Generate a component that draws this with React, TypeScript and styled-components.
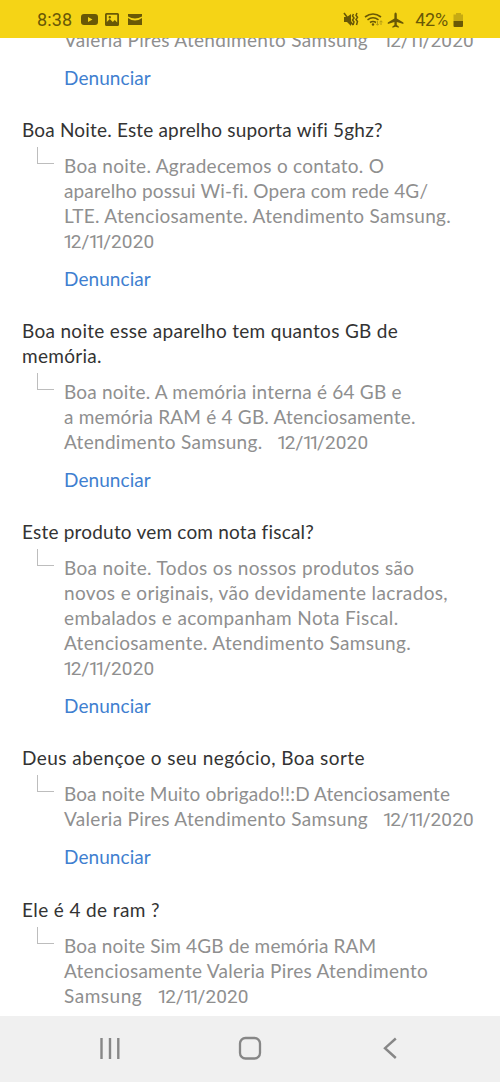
import React from 'react';
import styled, { createGlobalStyle } from 'styled-components';

const GlobalStyle = createGlobalStyle`
  * { box-sizing: border-box; }
  body { margin: 0; background: #fff; }
`;

const Screen = styled.div`
  width: 500px;
  height: 1082px;
  display: flex;
  flex-direction: column;
  overflow: hidden;
  background: #fff;
  font-family: Lato, sans-serif;
`;

const StatusBar = styled.header`
  flex: none;
  height: 38px;
  display: flex;
  align-items: center;
  padding: 2px 36px 0 37px;
  background: #f5d416;
  color: #695806;
  font-family: Roboto, sans-serif;
  font-size: 18px;
  line-height: 20px;
`;

const Clock = styled.span`
  width: 44px;
  letter-spacing: 0.1px;
`;

const StatusIcons = styled.svg`
  display: block;
  flex: none;
`;

const Spacer = styled.div`
  flex: 1;
`;

const Battery = styled.span`
  margin: 0 5px 0 10px;
  letter-spacing: -0.2px;
`;

const Content = styled.main`
  flex: 1;
  min-height: 0;
  overflow: hidden;
`;

const Feed = styled.div`
  margin-top: -11px;
  font-size: 19px;
  line-height: 25px;
`;

const Entry = styled.section`
  margin-bottom: 27.12px;
`;

const Question = styled.h2`
  margin: 0 0 11px 22px;
  font-size: inherit;
  font-weight: 400;
  color: #333;
`;

const Reply = styled.div`
  display: flex;
`;

const Elbow = styled.span`
  flex: none;
  width: 17px;
  height: 17px;
  margin: -6px 10px 0 37px;
  border-left: 1px solid #bdbdbd;
  border-bottom: 1px solid #bdbdbd;
`;

const Answer = styled.p<{ $indent?: boolean }>`
  margin: 0 0 0 ${(p) => (p.$indent ? '64px' : '0')};
  color: #8f8f8f;
`;

const Line = styled.span<{ $track: number }>`
  display: block;
  height: 25px;
  white-space: pre;
  letter-spacing: ${(p) => p.$track}px;
`;

const DateText = styled.span`
  font-family: Roboto, sans-serif;
  line-height: 1;
  letter-spacing: 0.1px;
`;

const One = styled.span`
  margin-left: -1.1px;
  letter-spacing: -2.8px;
`;

const Report = styled.a`
  display: block;
  margin: 13px 0 0 64px;
  color: #3f7fd0;
  letter-spacing: 0.08px;
`;

const NavBar = styled.nav`
  flex: none;
  height: 66px;
  display: flex;
  justify-content: center;
  gap: 110px;
  padding-top: 17px;
  background: #f0f0f0;
`;

type TextLine = { text: string; track: number; date?: string };
type QA = { question: TextLine[]; answer: TextLine[]; report?: boolean };

const items: QA[] = [
  {
    question: [],
    answer: [{ text: 'Valeria Pires Atendimento Samsung   ', track: 0.3, date: '12/11/2020' }],
    report: true,
  },
  {
    question: [{ text: 'Boa Noite. Este aprelho suporta wifi 5ghz?', track: 0.18 }],
    answer: [
      { text: 'Boa noite. Agradecemos o contato. O', track: 0.27 },
      { text: 'aparelho possui Wi-fi. Opera com rede 4G/', track: 0.13 },
      { text: 'LTE. Atenciosamente. Atendimento Samsung.', track: 0.3 },
      { text: '', track: 0, date: '12/11/2020' },
    ],
    report: true,
  },
  {
    question: [
      { text: 'Boa noite esse aparelho tem quantos GB de', track: 0.3 },
      { text: 'memória.', track: 0.3 },
    ],
    answer: [
      { text: 'Boa noite. A memória interna é 64 GB e', track: 0.2 },
      { text: 'a memória RAM é 4 GB. Atenciosamente.', track: 0.2 },
      { text: 'Atendimento Samsung.   ', track: 0.3, date: '12/11/2020' },
    ],
    report: true,
  },
  {
    question: [{ text: 'Este produto vem com nota fiscal?', track: 0.2 }],
    answer: [
      { text: 'Boa noite. Todos os nossos produtos são', track: 0.35 },
      { text: 'novos e originais, vão devidamente lacrados,', track: 0.36 },
      { text: 'embalados e acompanham Nota Fiscal.', track: 0.36 },
      { text: 'Atenciosamente. Atendimento Samsung.', track: 0.31 },
      { text: '', track: 0, date: '12/11/2020' },
    ],
    report: true,
  },
  {
    question: [{ text: 'Deus abençoe o seu negócio, Boa sorte', track: 0.42 }],
    answer: [
      { text: 'Boa noite Muito obrigado!!:D Atenciosamente', track: 0.1 },
      { text: 'Valeria Pires Atendimento Samsung   ', track: 0.3, date: '12/11/2020' },
    ],
    report: true,
  },
  {
    question: [{ text: 'Ele é 4 de ram ?', track: 0.38 }],
    answer: [
      { text: 'Boa noite Sim 4GB de memória RAM', track: 0.14 },
      { text: 'Atenciosamente Valeria Pires Atendimento', track: 0.26 },
      { text: 'Samsung   ', track: 0.52, date: '12/11/2020' },
    ],
  },
];

const DateStamp = ({ value }: { value: string }) => (
  <DateText>
    {value.split('').map((ch, i) => (ch === '1' ? <One key={i}>1</One> : ch))}
  </DateText>
);

const Lines = ({ lines }: { lines: TextLine[] }) => (
  <>
    {lines.map(({ text, track, date }, i) => (
      <Line key={i} $track={track}>
        {text}
        {date && <DateStamp value={date} />}
      </Line>
    ))}
  </>
);

export default function App() {
  return (
    <>
      <GlobalStyle />
      <Screen>
        <StatusBar>
          <Clock>8:38</Clock>
          <StatusIcons width="62" height="16" viewBox="0 0 62 16" fill="#695806">
            <path fillRule="evenodd" d="M3 2h11q3 0 3 3v5q0 3-3 3H3q-3 0-3-3V5q0-3 3-3Zm4 3v5l4.5-2.5Z" />
            <path fillRule="evenodd" d="M25.500 1h11q1.500 0 1.500 1.500v10q0 1.500-1.500 1.500h-11q-1.500 0-1.500-1.500v-10Q24 1 25.500 1Zm.3 1.800v7.200l3-3 3 3 2-2 2.400 2.400V2.800Zm3 1.200a1.200 1.200 0 1 1 0 2.400 1.200 1.200 0 0 1 0-2.400Z" />
            <path d="M47 2h14v2.500q-7 4-14 0ZM47 6q7 5 14 0V13H47Z" />
          </StatusIcons>
          <Spacer />
          <StatusIcons width="62" height="18" viewBox="-1 0 62 18" fill="none" stroke="#695806">
            <path d="M0 6h3l4-3v12l-4-4H0Z" fill="#695806" stroke="none" />
            <path d="m0 2 9 12" strokeWidth="1.500" />
            <path d="m9.500 3-1 2 1.500 2-1.500 2L10 11l-1 3M13 2l-1 2.300 1.500 2L12 8.500l1.500 2-1 3.500" strokeWidth="1.500" />
            <path d="M21 6q8-6 16 0M23.500 8.800q5.500-4 11 0M26 11.500q3-2 6 0" strokeWidth="1.600" />
            <circle cx="29" cy="13.500" r="1.200" fill="#695806" stroke="none" />
            <path d="M33.500 10v4m-1.500-1.300 1.500 1.600 1.500-1.600M37 14v-4m-1.500 1.300L37 9.700l1.500 1.600" stroke="#b29a10" />
            <path d="M50.200 1.500q1.200 0 1.200 2v4l6.600 4v1.600l-6.600-2v3l2 1.500v1.200l-3.200-1-3.200 1v-1.200l2-1.500v-3l-6.600 2v-1.600l6.600-4v-4q0-2 1.200-2Z" transform="translate(1.400 0)" fill="#695806" stroke="none" />
          </StatusIcons>
          <Battery>42%</Battery>
          <StatusIcons width="11" height="16" viewBox="0 0 11 16">
            <path d="M3 1h5v1.500h2V9H.5V2.500H3Z" fill="#c6aa12" />
            <path d="M.5 9H10v5q0 1-1 1H1.500q-1 0-1-1Z" fill="#695806" />
          </StatusIcons>
        </StatusBar>
        <Content>
          <Feed>
            {items.map((item, i) => (
              <Entry key={i}>
                {item.question.length > 0 ? (
                  <>
                    <Question><Lines lines={item.question} /></Question>
                    <Reply>
                      <Elbow />
                      <Answer><Lines lines={item.answer} /></Answer>
                    </Reply>
                  </>
                ) : (
                  <Answer $indent><Lines lines={item.answer} /></Answer>
                )}
                {item.report && <Report>Denunciar</Report>}
              </Entry>
            ))}
          </Feed>
        </Content>
        <NavBar>
          <svg width="30" height="30" viewBox="0 0 30 30" stroke="#878787" strokeWidth="2.400">
            <path d="M6.500 5v21M15 5v21M23.300 5v21" />
          </svg>
          <svg width="30" height="30" viewBox="0 0 30 30" fill="none" stroke="#878787" strokeWidth="2.300">
            <rect x="5" y="5" width="20" height="20.500" rx="5.500" />
          </svg>
          <svg width="30" height="30" viewBox="0 0 30 30" fill="none" stroke="#878787" strokeWidth="2.400">
            <path d="M20.800 5.500 10 15.200l10.800 9.800" />
          </svg>
        </NavBar>
      </Screen>
    </>
  );
}
